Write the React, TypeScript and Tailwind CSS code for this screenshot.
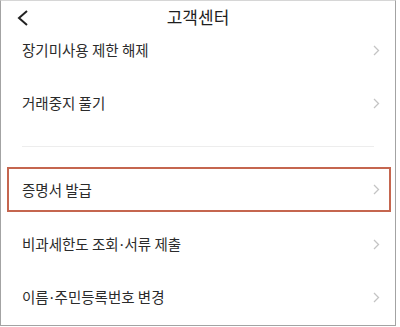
import React from "react";

const font = { fontFamily: '"Noto Sans CJK KR", "Noto Sans", sans-serif' };

const Chevron = () => (
  <svg width="7" height="11" viewBox="0 0 7 11" className="shrink-0">
    <path d="M1 1l4.5 4.5L1 10" fill="none" stroke="#c4c4c4" strokeWidth="1.3" />
  </svg>
);

// latin middle dot, narrower than the CJK one
const Dot = () => <span className="font-['Noto_Sans'] px-[1px]">·</span>;

const Row = ({ children }: { children: React.ReactNode }) => (
  <div className="flex h-[34px] items-center justify-between pl-[21px] pr-[15px]">
    <span className="text-[14.5px] text-[#2b2b2b]">{children}</span>
    <Chevron />
  </div>
);

export default function App() {
  return (
    <div className="w-[400px] h-[327px] bg-white" style={font}>
      <div className="w-[396px] h-[326px] border border-[#a3a3a3] border-t-[#d6d6d6]">
        <div className="relative flex h-[32px] items-center justify-center">
          <svg
            width="12"
            height="16"
            viewBox="0 0 12 16"
            className="absolute left-[16px] top-[9px]"
          >
            <path d="M10 1L2 8l8 7" fill="none" stroke="#222" strokeWidth="2" />
          </svg>
          <span className="text-[17px] text-[#1e1e1e]">고객센터</span>
        </div>

        <Row>장기미사용 제한 해제</Row>
        <div className="mt-[19px]">
          <Row>거래중지 풀기</Row>
        </div>

        <div className="mt-[26px] mx-[21px] h-px bg-[#ededed]" />

        <div className="mt-[20px] ml-[6px] mr-[4px] h-[45px] border-2 border-[#c5664f] flex items-center justify-between pl-[13px] pr-[9px]">
          <span className="text-[14.5px] text-[#2b2b2b]">증명서 발급</span>
          <Chevron />
        </div>

        <div className="mt-[15px]">
          <Row>
            비과세한도 조회<Dot />서류 제출
          </Row>
        </div>
        <div className="mt-[19px]">
          <Row>
            이름<Dot />주민등록번호 변경
          </Row>
        </div>
      </div>
    </div>
  );
}
